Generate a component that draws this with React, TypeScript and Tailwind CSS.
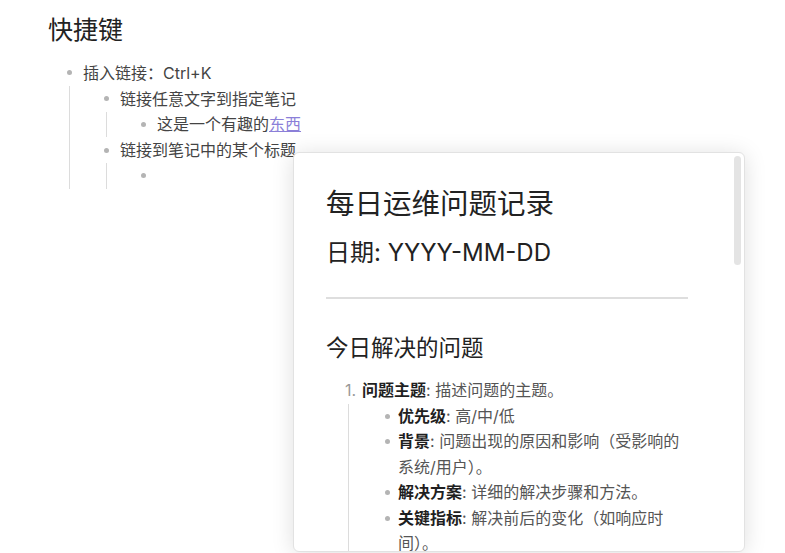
import React from 'react';

const font = { fontFamily: 'Inter, "Noto Sans CJK SC", sans-serif' };

const Dot: React.FC = () => (
  <span className="w-[14px] h-full flex items-center justify-center shrink-0">
    <span className="w-[5px] h-[5px] rounded-full bg-[#b4b4b4]" />
  </span>
);

const Row: React.FC<{ children?: React.ReactNode }> = ({ children }) => (
  <div className="flex items-center h-[25.75px]">
    <Dot />
    <span className="ml-[7px] whitespace-nowrap">{children}</span>
  </div>
);

const Guide: React.FC<{ children: React.ReactNode }> = ({ children }) => (
  <div className="ml-[7px] border-l border-[#dcdcdc] pl-[29px]">{children}</div>
);

const Item: React.FC<{ label: string; children: React.ReactNode }> = ({ label, children }) => (
  <li className="flex leading-[25.5px]">
    <span className="w-[14px] h-[25.5px] flex items-center justify-center shrink-0">
      <span className="w-[5px] h-[5px] rounded-full bg-[#b4b4b4]" />
    </span>
    <span className="ml-[4px] text-[#555]">
      <b className="font-semibold text-[#1f1f1f]">{label}</b>: {children}
    </span>
  </li>
);

export default function App() {
  return (
    <div className="relative w-[785px] h-[553px] bg-white overflow-hidden" style={font}>
      <div className="pl-[48px] pt-[13px]">
        <h1 className="text-[25px] leading-[34px] text-[#222]">快捷键</h1>
        <div className="mt-[13px] ml-[14px] text-[16px] text-[#444]">
          <Row>插入链接：Ctrl+K</Row>
          <Guide>
            <Row>链接任意文字到指定笔记</Row>
            <Guide>
              <Row>
                这是一个有趣的<span className="text-[#8b7fd8] underline">东西</span>
              </Row>
            </Guide>
            <Row>链接到笔记中的某个标题</Row>
            <Guide>
              <Row />
            </Guide>
          </Guide>
        </div>
      </div>

      <div className="absolute left-[293px] top-[152px] w-[452px] h-[400px] bg-white border border-[#e2e2e2] rounded-[6px] shadow-[0_2px_22px_rgba(0,0,0,0.13)] overflow-hidden">
        <div className="absolute right-[3px] top-[3px] w-[7px] h-[109px] rounded-full bg-[#e4e4e4]" />
        <div className="pl-[32px] pr-[56px] pt-[31px]">
          <h1 className="text-[28.5px] leading-[40px] text-[#222]">每日运维问题记录</h1>
          <h2 className="mt-[12px] text-[24px] leading-[34px] text-[#222]">日期: YYYY-MM-DD</h2>
          <div className="mt-[27px] h-[2px] bg-[#dedede]" />
          <h2 className="mt-[33px] text-[22.5px] leading-[31px] text-[#222]">今日解决的问题</h2>
          <div className="mt-[15px] ml-[19px] text-[16px]">
            <div className="flex leading-[25.5px]">
              <span className="text-[#999] w-[17px]">1.</span>
              <span className="text-[#555]">
                <b className="font-semibold text-[#1f1f1f]">问题主题</b>: 描述问题的主题。
              </span>
            </div>
            <div className="ml-[3px] border-l border-[#dcdcdc] pl-[31px] pr-[4px] h-[200px]">
              <ul>
                <Item label="优先级">高/中/低</Item>
                <Item label="背景">问题出现的原因和影响（受影响的系统/用户）。</Item>
                <Item label="解决方案">详细的解决步骤和方法。</Item>
                <Item label="关键指标">解决前后的变化（如响应时间）。</Item>
              </ul>
            </div>
          </div>
        </div>
      </div>
    </div>
  );
}
